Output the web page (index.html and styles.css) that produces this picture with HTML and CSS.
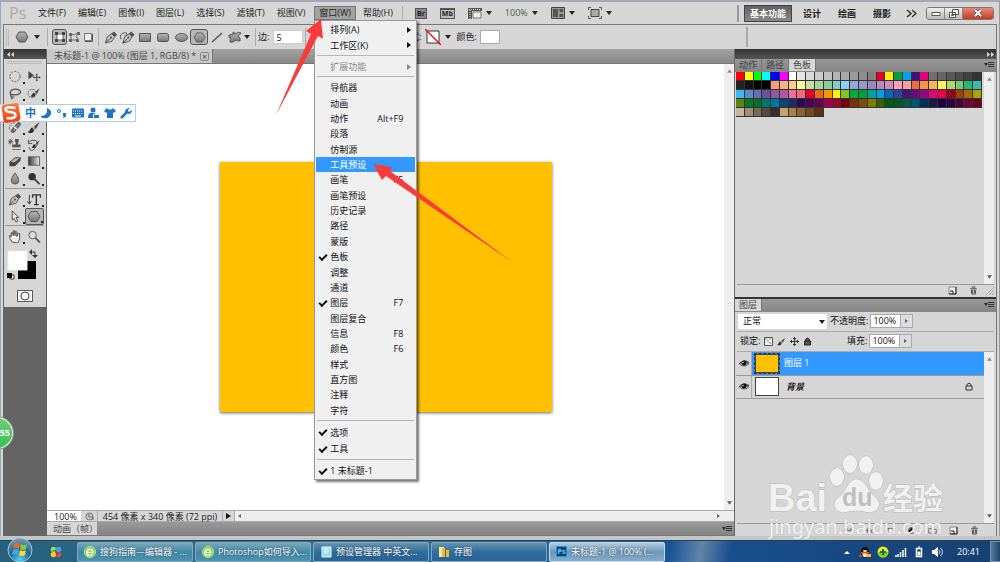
FILE: index.html
```html
<!DOCTYPE html>
<html lang="zh-CN">
<head>
<meta charset="utf-8">
<title>Photoshop</title>
<link rel="stylesheet" href="styles.css">
</head>
<body>
<svg class="defs" aria-hidden="true">
  <defs>
    <linearGradient id="metal" x1="0" y1="0" x2="0" y2="1"><stop offset="0" stop-color="#b5b5b5"/><stop offset="1" stop-color="#777"/></linearGradient>
    <linearGradient id="fade"><stop offset="0" stop-color="#333"/><stop offset="1" stop-color="#eee"/></linearGradient>
    <linearGradient id="sogou" x1="0" y1="0" x2="0" y2="1"><stop offset="0" stop-color="#ff7b3e"/><stop offset="1" stop-color="#f03c0c"/></linearGradient>
    <radialGradient id="orb" cx=".5" cy=".9" r=".9"><stop offset="0" stop-color="#4fd5f5"/><stop offset=".5" stop-color="#1f6596"/><stop offset="1" stop-color="#7d9fb3"/></radialGradient>
  </defs>
  <symbol id="hex" viewBox="0 0 14 12"><path d="M4 1h6l3 5-3 5H4L1 6z" fill="url(#metal)" stroke="#555"/></symbol>
  <symbol id="down" viewBox="0 0 6 4"><path d="M0 0h6L3 4z" fill="#222"/></symbol>
  <symbol id="up" viewBox="0 0 6 4"><path d="M0 4h6L3 0z" fill="#666"/></symbol>
  <symbol id="pen" viewBox="0 0 14 14"><path d="M1 13 3 6l5-3 3 3-3 5z" fill="#c4c4c4" stroke="#555"/><path d="M1 13l5-5" stroke="#444"/><path d="m8 3 2-2 3 3-2 2z" fill="#555" stroke="#444"/><circle cx="7" cy="7" r="1" fill="#444"/></symbol>
  <symbol id="brush" viewBox="0 0 14 14"><path d="M13 1 7 6l2 3z" fill="#444"/><path d="M7 6 5 8l2 2 2-1z" fill="#999"/><path d="M5 7c-2 0-2 4-5 5 3 2 7 1 7-2z" fill="#333"/></symbol>
  <symbol id="eye" viewBox="0 0 10 9"><path d="M0 4Q5-1 10 3v2Q5 10 0 5z" fill="#555"/><path d="M1 5Q5 2 9 5 5 8 1 5z" fill="#ddd"/><circle cx="5" cy="4" r="2.500" fill="#111"/><circle cx="4" cy="3.500" r=".7" fill="#fff"/></symbol>
  <symbol id="lock" viewBox="0 0 8 9"><path d="M1 4h6v4H1zM2 4V2.500Q4-.5 6 2.500V4" fill="none" stroke="#333"/></symbol>
  <symbol id="page" viewBox="0 0 9 9"><path d="M1 1h7v7H1z" fill="#eee" stroke="#888"/><path d="M8 1v7H1M2 5h3v3" fill="none" stroke="#222"/></symbol>
  <symbol id="trash" viewBox="0 0 9 10"><path d="M1 3h7M3 2V1h3v1M2 4l.5 5h4L7 4M3.500 4v4M5.500 4v4" fill="none" stroke="#444"/></symbol>
  <symbol id="panelmenu" viewBox="0 0 10 6"><path d="M0 1h4L2 4z" fill="#222"/><path d="M4 .5h6M4 2.500h6M4 4.500h6" stroke="#333"/></symbol>
  <symbol id="browser" viewBox="0 0 12 12"><circle cx="6" cy="6" r="5.500" fill="#75cf31" stroke="#b9f194"/><path d="M3 6.500h6C9 2 3 2.500 3 6.500s4 3.500 6 1.500" fill="none" stroke="#fff" stroke-width="1.500"/></symbol>
</svg>

<div class="app">
  <header class="menubar">
    <span class="brand">Ps</span>
    <nav class="menus">
      <button>文件(F)</button><button>编辑(E)</button><button>图像(I)</button><button>图层(L)</button><button>选择(S)</button><button>滤镜(T)</button><button>视图(V)</button>
      <div class="menu-open">
        <button class="active">窗口(W)</button>
        <div class="menu">
          <div class="group pair"><button>排列(A)<i class="sub"></i></button><button>工作区(K)<i class="sub"></i></button></div>
          <div class="group one"><button disabled>扩展功能<i class="sub"></i></button></div>
          <div class="group many">
            <button>导航器</button><button>动画</button><button>动作<kbd>Alt+F9</kbd></button><button>段落</button><button>仿制源</button>
            <button class="hover">工具预设</button><button>画笔<kbd>F5</kbd></button><button>画笔预设</button><button>历史记录</button><button>路径</button><button>蒙版</button>
            <button class="on">色板</button><button>调整</button><button>通道</button><button class="on">图层<kbd>F7</kbd></button><button>图层复合</button>
            <button>信息<kbd>F8</kbd></button><button>颜色<kbd>F6</kbd></button><button>样式</button><button>直方图</button><button>注释</button><button>字符</button>
          </div>
          <div class="group views"><button class="on">选项</button><button class="on">工具</button></div>
          <div class="group one"><button class="on">1 未标题-1</button></div>
        </div>
      </div>
      <button>帮助(H)</button>
    </nav>
    <div class="appbar">
      <span class="badge">Br</span><span class="badge folder">Mb</span>
      <span class="drop"><svg width="14" height="12" viewBox="0 0 14 12"><path d="M0 1h14v3H4v8H0z" fill="#555"/><path d="M1 2.500h12M2 3v9" stroke="#ddd" stroke-dasharray="1 1"/><path d="M5 5h8v6H5z" fill="#eee" stroke="#777"/></svg><svg class="caret"><use href="#down"/></svg></span>
      <span class="drop zoomtext">100%<svg class="caret"><use href="#down"/></svg></span>
      <span class="drop"><svg width="14" height="12" viewBox="0 0 14 12"><path d="M.5.5h13v11H.5z" fill="#999" stroke="#444"/><path d="M2 2h5v8H2zM8.500 2H12v3H8.500zM8.500 7H12v3H8.500z" fill="#555"/></svg><svg class="caret"><use href="#down"/></svg></span>
      <span class="drop"><svg width="14" height="12" viewBox="0 0 14 12"><path d="M3 2.500h8v7H3z" fill="#aaa" stroke="#444"/><path d="M.5 3V.5H3M11 .5h2.500V3M.5 9v2.500H3M11 11.500h2.500V9" fill="none" stroke="#555"/></svg><svg class="caret"><use href="#down"/></svg></span>
    </div>
    <div class="spaces">
      <button class="current">基本功能</button><button>设计</button><button>绘画</button><button>摄影</button>
      <svg width="11" height="9" viewBox="0 0 11 9"><path d="m1 1 4 3.500L1 8M6 1l4 3.500L6 8" fill="none" stroke="#333" stroke-width="1.500"/></svg>
    </div>
    <div class="winbtns">
      <button aria-label="最小化"><svg width="10" height="8" viewBox="0 0 10 8"><path d="M1 3.500h8v3H1z" fill="#fff" stroke="#555"/></svg></button>
      <button aria-label="还原"><svg width="10" height="9" viewBox="0 0 10 9"><path d="M3.500.5h6v5h-6zM.5 3.500h6v5h-6zM2.500 5.500h2v1h-2z" fill="#fff" stroke="#555"/></svg></button>
      <button class="close" aria-label="关闭"><svg width="10" height="8" viewBox="0 0 10 8"><path d="m2 1 6 6M8 1 2 7" stroke="#645" stroke-width="3.500"/><path d="m2 1 6 6M8 1 2 7" stroke="#fff" stroke-width="2"/></svg></button>
    </div>
  </header>

  <section class="options">
    <i class="grip"></i>
    <span class="drop tool-pick"><svg width="14" height="12"><use href="#hex"/></svg><svg class="caret"><use href="#down"/></svg></span>
    <div class="set ruled modes">
      <span class="cell pressed"><svg width="10" height="10" viewBox="0 0 10 10"><path d="M2 2h6v6H2z" fill="#fff" stroke="#666"/><path d="M0 0h3v3H0zM7 0h3v3H7zM0 7h3v3H0zM7 7h3v3H7z" fill="#444"/></svg></span>
      <span class="cell"><svg width="11" height="10" viewBox="0 0 11 10"><path d="M2 2Q5 4 9 1 6 5 9 8H2z" fill="none" stroke="#666"/><path d="M0 1h3v3H0zM8 0h3v3H8zM0 7h3v3H0zM7 7h3v3H7z" fill="#666"/></svg></span>
      <span class="cell"><svg width="9" height="9" viewBox="0 0 9 9"><path d="M.5.5h7v7h-7z" fill="#eee" stroke="#777"/><path d="M1 8.500h7.500V1" fill="none" stroke="#555"/></svg></span>
    </div>
    <div class="set ruled shapes">
      <span class="cell"><svg width="14" height="13"><use href="#pen"/></svg></span>
      <span class="cell"><svg width="15" height="13" viewBox="0 0 16 14"><use href="#pen" x="2" width="14" height="14"/><path d="M1 9Q-1 3 4 2T6 5" fill="none" stroke="#555"/></svg></span>
      <span class="cell"><svg width="12" height="11" viewBox="0 0 12 11"><path d="M.5 1.500h11v8H.5z" fill="url(#metal)" stroke="#555"/></svg></span>
      <span class="cell"><svg width="12" height="11" viewBox="0 0 12 11"><rect x=".5" y="1.500" width="11" height="8" rx="2" fill="url(#metal)" stroke="#555"/></svg></span>
      <span class="cell"><svg width="13" height="11" viewBox="0 0 13 11"><ellipse cx="6.500" cy="5.500" rx="6" ry="4" fill="url(#metal)" stroke="#555"/></svg></span>
      <span class="cell pressed"><svg width="13" height="11"><use href="#hex"/></svg></span>
      <span class="cell"><svg width="12" height="11" viewBox="0 0 12 11"><path d="m1 10 10-9" stroke="#555" stroke-width="1.500"/></svg></span>
      <span class="cell"><svg width="14" height="12" viewBox="0 0 14 12"><path d="M5 1q2 0 2 2 4-3 6-1-1 2-3 3 3 2 2 5-3 0-4-1-3 3-6 2 0-3 1-4-3 0-2-3 2-1 4 0z" fill="url(#metal)" stroke="#555"/></svg></span>
      <svg class="caret"><use href="#down"/></svg>
    </div>
    <div class="set ruled field"><label for="sides">边:</label><input id="sides" value="5"></div>
    <div class="set ruled style-set"><span>样式:</span><svg width="16" height="16" viewBox="0 0 16 16"><path d="M2 2h12v12H2z" fill="#fff" stroke="#333"/><path d="m0 0 16 16" stroke="#e11" stroke-width="1.500"/></svg><svg class="caret"><use href="#down"/></svg></div>
    <div class="set colour"><label for="fill">颜色:</label><input id="fill" readonly></div>
    <i class="tail-rule"></i>
  </section>

  <main class="workspace">
    <aside class="tools">
      <div class="dockhead"><svg width="7" height="5" viewBox="0 0 7 5"><path d="M3 0v5L0 2.500zM7 0v5L4 2.500z" fill="#ddd"/></svg></div>
      <div class="toolbox">
        <i class="grip-h"></i>
        <div class="toolgrid">
          <span class="more"><svg viewBox="0 0 14 14"><circle cx="7" cy="7" r="5.500" fill="none" stroke="#444" stroke-dasharray="2 1.500"/></svg></span>
          <span><svg viewBox="0 0 14 14"><path d="M1 1v9l6-4z" fill="#444"/><path d="M10 4v8M6 8h8M9 5h2M9 11h2M7 7v2M13 7v2" stroke="#444"/></svg></span>
          <span class="more"><svg viewBox="0 0 14 14"><path d="M3 9C-1 4 6 1 11 3s0 7-8 5q-2 3 2 3l-2 2" fill="none" stroke="#555" stroke-width="1.500"/></svg></span>
          <span class="more"><svg viewBox="0 0 14 14"><circle cx="5" cy="7" r="4.500" fill="none" stroke="#555" stroke-dasharray="2 1"/><use href="#brush" x="3" y="0" width="11" height="12"/></svg></span>
          <span></span><span></span>
          <span class="more"><svg viewBox="0 0 14 14"><path d="m3 10 7-8q3-1 3 2l-7 8q-4 1-3-2z" fill="#777" stroke="#444"/><path d="m6 6 3 3" stroke="#ddd" stroke-width="2"/><path d="M1 9Q0 2 7 2" fill="none" stroke="#555" stroke-dasharray="2 1"/></svg></span>
          <span class="more"><svg viewBox="0 0 14 14"><use href="#brush" width="14" height="14"/></svg></span>
          <span class="more"><svg viewBox="0 0 14 14"><path d="M7 1h4v2L10 7h3v3H4V7h4L7 3zM4 12h9v1H4z" fill="#555"/><path d="M0 2l4 4M4 2 0 6M2 1v6M0 4h5" stroke="#555"/></svg></span>
          <span class="more"><svg viewBox="0 0 14 14"><path d="M2 4q3-3 7-1t-1 8-6-1M1 2v4h4" fill="none" stroke="#444"/><use href="#brush" x="4" y="1" width="10" height="11"/></svg></span>
          <span class="more"><svg viewBox="0 0 14 14"><path d="m1 8 6-5h6l-6 5z" fill="#bbb" stroke="#444"/><path d="M1 8h6l6-5v3l-6 6H1z" fill="#444"/></svg></span>
          <span class="more"><svg viewBox="0 0 14 14"><path d="M1 2h12v9H1z" fill="url(#fade)" stroke="#555"/></svg></span>
          <span class="more"><svg viewBox="0 0 14 14"><path d="M7 1q4 5 4 8a4 4 0 0 1-8 0q0-3 4-8z" fill="url(#metal)" stroke="#555"/></svg></span>
          <span class="more"><svg viewBox="0 0 14 14"><circle cx="5" cy="5" r="4" fill="#333"/><path d="m7 7 6 6" stroke="#444" stroke-width="2"/></svg></span>
        </div>
        <div class="toolgrid ruled-top">
          <span class="more"><svg><use href="#pen"/></svg></span>
          <span class="more"><svg viewBox="0 0 14 14"><path d="M5 2h9v3M9.500 2v10M7 12.500h5M5.500 2v3" fill="none" stroke="#333" stroke-width="1.500"/><path d="M2 2v9M0 9l2 3 2-3" fill="none" stroke="#333"/></svg></span>
          <span class="more"><svg viewBox="0 0 14 14"><path d="M4 1v10l2-2 2 4 2-1-2-4h3z" fill="#eee" stroke="#444"/></svg></span>
          <span class="more chosen"><svg><use href="#hex"/></svg></span>
        </div>
        <div class="toolgrid ruled-top">
          <span class="more"><svg viewBox="0 0 14 14"><path d="M4 13Q1 9 1 6l2 1V3h2v3-5h2v5-4h2v5l1-3h2q1 6-2 10z" fill="#eee" stroke="#444"/></svg></span>
          <span><svg viewBox="0 0 14 14"><circle cx="5.500" cy="5.500" r="4" fill="#ddd" stroke="#555"/><path d="m8.500 8.500 5 5" stroke="#555" stroke-width="2"/></svg></span>
        </div>
        <svg class="fgbg" viewBox="0 0 36 34"><path d="M13 14h18v18H13z"/><path d="M3 4h19v19H3z" fill="#fff" stroke="#eee"/><path d="M26 5h4v5" fill="none" stroke="#333"/><path d="M27 2v6l-3-3zM27 8h6l-3 3z" fill="#333"/><path d="M5 28h4v4H5z" fill="#fff" stroke="#333"/><path d="M2 26h5v5H2z"/></svg>
        <svg class="mask" viewBox="0 0 16 12"><path d="M.5.5h15v11H.5z" fill="#fff" stroke="#555"/><circle cx="8" cy="6" r="4" fill="#fff" stroke="#444"/></svg>
      </div>
    </aside>

    <section class="document">
      <div class="doctabs"><div class="doctab">未标题-1 @ 100% (图层 1, RGB/8) *<button aria-label="关闭">×</button></div></div>
      <div class="view">
        <div class="stage"><div class="artboard"></div></div>
        <div class="vscroll"><svg><use href="#up"/></svg><svg><use href="#down"/></svg></div>
      </div>
      <div class="status">
        <span class="percent">100%</span><span class="clock"><svg width="9" height="9" viewBox="0 0 9 9"><circle cx="4.500" cy="4.500" r="3.500" fill="#ccc" stroke="#777"/><path d="M4 2v3h4v3" fill="none" stroke="#666"/></svg></span>
        <span class="info">454 像素 x 340 像素 (72 ppi)</span><span class="next"></span>
        <span class="hscroll"><i class="left"></i><i class="right"></i></span>
      </div>
      <div class="animation"><span>动画（帧）</span><svg class="pm"><use href="#panelmenu"/></svg></div>
    </section>

    <aside class="panels">
      <div class="dockhead end"><svg width="7" height="5" viewBox="0 0 7 5"><path d="M0 0v5l3-2.500zM4 0v5l3-2.500z" fill="#ddd"/></svg></div>
      <section class="panel swatch-panel">
        <div class="tabs"><button>动作</button><button>路径</button><button class="current">色板</button><svg class="pm"><use href="#panelmenu"/></svg></div>
        <div class="panel-body"><div class="content"><div class="swatches" id="swatches"></div></div><div class="vscroll"><svg><use href="#up"/></svg><svg><use href="#down"/></svg></div></div>
        <div class="foot"><svg><use href="#page"/></svg><svg><use href="#trash"/></svg><svg viewBox="0 0 9 9" class="resize"><path d="m1 9 8-8M4 9l5-5M7 9l2-2" stroke="#aaa"/></svg></div>
      </section>
      <section class="panel layer-panel">
        <div class="tabs"><button class="current">图层</button><svg class="pm"><use href="#panelmenu"/></svg></div>
        <div class="controls">
          <div class="blend"><select aria-label="混合模式"><option>正常</option></select><svg class="caret"><use href="#down"/></svg></div>
          <label for="opacity">不透明度:</label><span class="amount"><input id="opacity" value="100%"><button aria-label="调整不透明度"></button></span>
        </div>
        <div class="controls">
          <div class="locks"><span>锁定:</span><svg viewBox="0 0 9 9"><path d="M.5.5h8v8h-8z" fill="#eee" stroke="#555"/><path d="M1 1h2v2H1zM5 1h2v2H5zM3 3h2v2H3zM5 5h2v2H5z" fill="#bbb"/></svg><svg viewBox="0 0 14 14"><use href="#brush"/></svg><svg viewBox="0 0 9 9"><path d="M4.500 0v9M0 4.500h9M3 1.500h3M3 7.500h3M1.500 3v3M7.500 3v3" stroke="#333"/></svg><svg viewBox="0 0 8 9"><path d="M1 4h6v4H1zM2 4V2.500Q4-.5 6 2.500V4" fill="#555" stroke="#222"/></svg></div>
          <label for="fillamt">填充:</label><span class="amount"><input id="fillamt" value="100%"><button aria-label="调整填充"></button></span>
        </div>
        <div class="panel-body">
          <div class="content layers">
            <div class="layer selected"><span class="vis"><svg><use href="#eye"/></svg></span><i class="thumb gold"></i><span>图层 1</span></div>
            <div class="layer"><span class="vis"><svg><use href="#eye"/></svg></span><i class="thumb"></i><em>背景</em><svg class="lock"><use href="#lock"/></svg></div>
          </div>
          <div class="vscroll"><svg><use href="#up"/></svg><svg><use href="#down"/></svg></div>
        </div>
        <div class="foot layer-foot">
          <svg viewBox="0 0 12 9"><path d="M1 4.500q0-2 2-2h2m-2 4q-2 0-2-2M7 2.500h2q2 0 2 2t-2 2H7M3 4.500h6" fill="none" stroke="#555"/></svg><svg viewBox="0 0 12 9"><path d="M5 1Q3 1 3 8M1 4h4M6 3l4 5M10 3 6 8" fill="none" stroke="#444"/></svg><svg viewBox="0 0 12 9"><path d="M1 1h10v7H1z" fill="#777"/><circle cx="6" cy="4.500" r="2.500" fill="#fff"/></svg><svg viewBox="0 0 12 9"><circle cx="6" cy="4.500" r="4" fill="#eee" stroke="#222"/><path d="M3 7A4 4 0 0 1 9 2z"/></svg><svg viewBox="0 0 12 9"><path d="M1 8V2h4l1 1h5v5z" fill="#ddd" stroke="#555"/></svg><svg><use href="#page"/></svg><svg><use href="#trash"/></svg>
        </div>
      </section>
    </aside>
  </main>
</div>

<footer class="taskbar">
  <button class="start" aria-label="开始"><svg viewBox="0 0 26 24"><circle cx="13" cy="12" r="12" fill="url(#orb)" stroke="#9fc4d5"/><path d="M7 6q3-2 6 0l-1 5q-3-2-6 0z" fill="#ec6b2b"/><path d="M14 6q3 2 6 0l-1 5q-3 2-6 0z" fill="#8cc63f"/><path d="M6 12q3-2 6 0l-1 5q-3-2-6 0z" fill="#4aa8e8"/><path d="M13 12q3 2 6 0l-1 5q-3 2-6 0z" fill="#ffd23e"/></svg></button>
  <svg class="quick" viewBox="0 0 12 12"><circle cx="3.500" cy="3.500" r="2.700" fill="#a4da45"/><circle cx="8.500" cy="3.500" r="2.700" fill="#3ba2ee"/><circle cx="3.500" cy="8.500" r="2.700" fill="#ffc928"/><circle cx="8.500" cy="8.500" r="2.700" fill="#ed4b32"/><path d="M3 5.500q3-3 3 .5t3 .5" fill="none" stroke="#245a78"/></svg>
  <div class="tasks">
    <button class="light"><svg><use href="#browser"/></svg><span>搜狗指南—编辑器 - ...</span></button>
    <button class="light"><svg><use href="#browser"/></svg><span>Photoshop如何导入...</span></button>
    <button><svg viewBox="0 0 12 12"><path d="M2 1h9v10H2z" fill="#9adbe5" stroke="#e2fbff"/><path d="M4 3h5M4 5h5M4 7h4" stroke="#d9ffff"/></svg><span>预设管理器 中英文...</span></button>
    <button><svg viewBox="0 0 12 12"><path d="M1 1h5v10H1z" fill="#ffe98a"/><path d="M4 2h3v9H4zM8 4h3v7H8z" fill="#e7bd3d"/></svg><span>存图</span></button>
    <button class="front"><b>Ps</b><span>未标题-1 @ 100% (...</span></button>
  </div>
  <div class="tray">
    <svg viewBox="0 0 12 12"><path d="M3 8h6L6 5z" fill="#fff"/></svg>
    <svg viewBox="0 0 12 12"><ellipse cx="6" cy="6" rx="4" ry="5.500" fill="#111"/><ellipse cx="6" cy="8" rx="2.500" ry="3" fill="#fff"/><path d="M2 6h8v1.500H2zM1 8l2 2v1H0z" fill="#e42"/><path d="M7 8h5v3H7zM4 4h4v1H4z" fill="#fb2"/></svg>
    <svg viewBox="0 0 12 12"><circle cx="6" cy="6" r="5.500" fill="#f7e71d"/><path d="M1 6a5 5 0 0 0 10 0z" fill="#7ac82b"/><path d="M6 3v6M3 6h6" stroke="#174" stroke-width="2"/></svg>
    <svg viewBox="0 0 12 12"><path d="M1 9v2M3 8v3M5.500 6v5M8 4v7M10.500 2v9" stroke="#fff" stroke-width="1.500"/></svg>
    <svg viewBox="0 0 12 12"><path d="M3.500 2.500h5v8h-5z" fill="none" stroke="#fff" stroke-width="1.500"/><path d="M5 1h2M5 6h2v3H5z" fill="#fff" stroke="#fff"/></svg>
    <svg viewBox="0 0 12 12"><path d="M1 4h2l4-3v10L3 8H1z" fill="#fff"/><path d="M8 4q2 2 0 4M9.500 2q4 4 0 8" fill="none" stroke="#cde"/></svg>
  </div>
  <time>20:41</time>
  <button class="peek" aria-label="显示桌面"></button>
</footer>

<div class="ime">
  <svg class="sogou" viewBox="0 0 20 20"><path d="M3 2 16 0q2 0 2 2l2 13q0 2-2 3L6 20q-2 0-3-2L1 4q0-1 2-2z" fill="url(#sogou)"/><path d="M15 5Q6 3 5 6q0 3 5 3 6 1 5 4-1 3-9 2" fill="none" stroke="#fff" stroke-width="2.500"/></svg>
  <b>中</b>
  <svg viewBox="0 0 12 12"><path d="M7 1q5 2 4 6-2 5-7 4-3 0-3-2 7 0 6-8z" fill="#1d73c6"/></svg>
  <svg viewBox="0 0 12 12"><circle cx="3" cy="4" r="1.500" fill="none" stroke="#1d73c6"/><path d="M7 6h3v3l-2 2H7l1-2H7z" fill="#1d73c6"/></svg>
  <svg viewBox="0 0 12 12"><rect y="1.500" width="12" height="9" rx="1" fill="#1d73c6"/><path d="M1 4h10M1 6.500h10" stroke="#fff" stroke-dasharray="1 1"/><path d="M3 9h6" stroke="#fff"/></svg>
  <svg viewBox="0 0 12 12"><circle cx="5" cy="3" r="2.500" fill="#1d73c6"/><path d="M0 11q0-6 5-5 4 0 5 5z" fill="#1d73c6"/><path d="M5.500 7.500h6v4h-6z" fill="#1d73c6" stroke="#fff"/></svg>
  <svg viewBox="0 0 12 12"><path d="m3 1 1 1q2 1 4 0l1-1 3 3-2 2-1-1v6H3V5L2 6 0 4z" fill="#1d73c6"/></svg>
  <svg viewBox="0 0 12 12"><path d="m1 11 6-6" stroke="#1d73c6" stroke-width="2.500"/><path d="M10 1 8 3v1l1 1 3-2q0 4-4 4-3-1-3-3 1-3 5-3z" fill="#1d73c6"/></svg>
</div>
<div class="speedball">55</div>

<svg class="watermark" viewBox="0 0 190 90" width="190" height="90">
  <g class="mark">
    <text x="1" y="61" class="wm-latin">Bai</text>
    <ellipse cx="70" cy="27" rx="7" ry="9"/><ellipse cx="83" cy="14" rx="7" ry="9"/><ellipse cx="99" cy="15" rx="7" ry="9"/><ellipse cx="109" cy="31" rx="7" ry="9"/>
    <path d="M89 29q6 0 10 7t9 11q6 5 3 11-3 5-11 4-11-3-21 0-9 1-11-5-2-6 4-10 5-4 8-10t9-8z"/>
    <text x="116" y="59" class="wm-cjk">经验</text>
    <text x="75" y="56" class="wm-du">du</text>
    <text x="2" y="84" class="wm-url">jingyan.baidu.com</text>
  </g>
</svg>
<svg class="arrows" viewBox="0 0 1000 562" width="1000" height="562">
  <path d="M276 115 311 34l-5-3 15-12 2 20-5-3zM512 262 386 176l-4 4-9-16 19 3-2 4z" fill="#fb3b3b"/>
</svg>
<script src="swatches.js"></script>
</body>
</html>
```
FILE: styles.css
```css
* { box-sizing: border-box; }
body { margin: 0; height: 100vh; min-width: 960px; overflow: hidden; display: flex; flex-direction: column; background: #d6d6d6; color: #222; font: 9px/12px "Open Sans", "Noto Sans CJK SC", sans-serif; }
button, input, select { font: inherit; color: inherit; margin: 0; padding: 0; border: 0; background: none; border-radius: 0; }
button { white-space: nowrap; }
svg { flex: none; display: block; }
.defs { position: absolute; width: 0; height: 0; }
.caret { width: 6px; height: 4px; }

.app { flex: 1; min-height: 0; display: flex; flex-direction: column; padding: 0 3px 0 3px; border-top: 2px solid #a5a7b2; border-bottom: 4px solid #c5c5c5; background: #d6d6d6; box-shadow: inset 1px 0 #9aa7b3, inset -1px 0 #999; }
.menubar { flex: none; height: 22px; display: flex; align-items: center; }
.brand { width: 29px; padding-left: 6px; color: #aaa; font: 16px/20px "Open Sans", sans-serif; }
.menus { display: flex; height: 100%; align-items: center; padding-right: 3px; }
.menus > button, .menu-open > button { padding: 0 6px; height: 14px; line-height: 12px; border: 0; }
.menu-open { position: relative; margin: 0 1px 0 3px; }
.menu-open > .active { border: 1px solid #777; background: #a2a2a2; padding: 0 4px; }
.menu { position: absolute; z-index: 10; top: 14px; left: 0; width: 103px; padding: 1px; border: 1px solid #999; background: #f0f0f0; box-shadow: 2px 2px 2px #0008; }
.group { display: grid; grid-auto-rows: 1fr; margin: 0 0 2px; position: relative; }
.group + .group { padding-top: 4px; }
.group + .group::before { content: ""; position: absolute; top: 0; left: 1px; right: 1px; border-top: 1px solid #b5b5b5; }
.group:last-child { margin-bottom: 0; }
.pair { min-height: 31px; }
.one { min-height: 19px; }
.many { min-height: 342px; }
.views { min-height: 37px; }
.menu button { display: flex; align-items: center; justify-content: space-between; padding: 0 12px 0 14px; text-align: left; line-height: 13px; color: #111; position: relative; }
.menu button:disabled { color: #888; }
.menu .hover { background: #3399ff; color: #fff; }
.menu kbd { font: inherit; }
.menu .on::before { content: ""; position: absolute; left: 3px; top: 5px; width: 6px; height: 3px; border: solid #111; border-width: 0 0 2px 2px; rotate: -45deg; }
.sub { border: solid transparent; border-width: 3px 0 3px 4px; border-left-color: currentColor; margin-right: -8px; }

.appbar { display: flex; align-items: center; gap: 13px; padding-left: 12px; border-left: 1px solid #aaa; height: 15px; }
.badge { border: 1px solid #555; background: #888; color: #222; font: bold 7px/9px "Open Sans", sans-serif; padding: 0 1px; }
.folder { background: #bbb; border-top-width: 2px; line-height: 8px; }
.drop { display: flex; align-items: center; gap: 5px; }
.appbar .drop { gap: 4px; }
.zoomtext { color: #555; }
.spaces { margin-left: auto; display: flex; align-items: center; gap: 17px; padding-left: 5px; border-left: 2px solid #999; font-weight: bold; }
.spaces button { line-height: 15px; }
.spaces .current { background: linear-gradient(#606060, #888); border: 1px solid #444; color: #fff; padding: 0 5px; margin-right: -6px; }
.spaces svg { margin-left: -2px; }
.winbtns { display: flex; margin-left: 9px; border: 1px solid #777; border-radius: 3px; overflow: hidden; margin-right: 3px; }
.winbtns button { width: 18px; height: 11px; display: grid; place-items: center; background: linear-gradient(#eee, #bbb); border-right: 1px solid #888; }
.winbtns .close { width: 30px; background: linear-gradient(#e68a75, #c53a20); border: 0; }

.options { flex: none; height: 25px; display: flex; align-items: center; border: 1px solid #777; border-bottom: 0; }
.grip { width: 3px; height: 17px; margin: 0 6px 0 2px; border: solid #bbb; border-width: 0 1px; }
.tool-pick { padding-right: 7px; }
.set { display: flex; align-items: center; height: 18px; }
.ruled { border-left: 1px solid #aaa; padding-left: 4px; }
.cell { width: 18px; height: 16px; display: grid; place-items: center; flex: none; }
.modes .cell { width: 14px; }
.modes .pressed, .shapes .cell:first-child { width: 15px; }
.pressed { border: 1px solid #555; border-radius: 3px; background: #b8b8b8; }
.modes { padding-right: 3px; }
.shapes { padding-right: 5px; }
.field { gap: 4px; padding: 0 2px; }
.field input, .colour input { width: 30px; height: 14px; background: #fff; border: 1px solid #ccc; padding: 0 2px; }
.style-set { width: 146px; justify-content: flex-end; gap: 4px; }
.colour { padding-left: 5px; gap: 3px; }
.colour input { width: 20px; border-color: #aaa; }
.tail-rule { margin-left: auto; margin-right: 248px; height: 20px; border-left: 2px solid #aaa; }

.workspace { flex: 1; min-height: 0; display: flex; }
.dockhead { height: 10px; flex: none; padding: 3px 7px 0; background: linear-gradient(#333, #555); display: flex; }
.tools .dockhead { padding-left: 3px; }
.end { justify-content: flex-end; padding-right: 2px; }
.tools { width: 44px; background: #646464; border: solid #646464; border-width: 0 1px 0 1px; flex: none; }
.toolbox { background: #d6d6d6; display: flex; flex-direction: column; padding: 2px 2px 5px 1px; }
.grip-h { height: 3px; border: solid #bbb; border-width: 1px 0; margin: 0 2px 3px; }
.toolgrid { display: grid; grid-template-columns: 1fr 1fr; grid-auto-rows: 17px; padding: 1px 0; }
.toolgrid span { display: grid; place-items: center; position: relative; }
.toolgrid svg { width: 14px; height: 13px; }
.more::after { content: ""; position: absolute; right: 0; bottom: 1px; border: 1px solid #222; }
.chosen { border: 1px solid #555; border-radius: 2px; background: #b5b5b5; }
.ruled-top { border-top: 1px solid #999; padding: 2px 0 0; }
.fgbg { width: 36px; height: 34px; margin: 2px 0 9px; }
.mask { width: 16px; height: 12px; align-self: center; }

.document { flex: 1; min-width: 0; display: flex; flex-direction: column; border-right: 1px solid #666; }
.doctabs { flex: none; height: 15px; display: flex; background: linear-gradient(#a2a2a2, #888); border-bottom: 1px solid #777; }
.doctab { display: flex; align-items: center; gap: 4px; padding: 0 3px 0 7px; background: #c8c8c8; border-right: 1px solid #777; color: #444; }
.doctab button { width: 9px; height: 9px; border: 1px solid #888; border-radius: 2px; line-height: 7px; }
.view { flex: 1; display: flex; min-height: 0; background: #fff; }
.stage { flex: 1; display: grid; place-items: center; }
.artboard { width: 332px; height: 250px; background: #ffc000; box-shadow: 0 1px 3px #0009; }
.vscroll { flex: none; width: 10px; background: #eee; display: flex; flex-direction: column; justify-content: space-between; align-items: center; padding: 5px 0; }
.vscroll svg { width: 5px; height: 4px; opacity: .7; }
.status { flex: none; height: 12px; display: flex; border: solid #aaa; border-width: 1px 0; line-height: 11px; background: #d6d6d6; }
.percent { width: 34px; padding-left: 7px; background: #fff; }
.clock { width: 17px; display: grid; place-items: center; border-right: 1px solid #aaa; }
.info { width: 125px; text-align: center; border-right: 1px solid #aaa; }
.next { width: 12px; border-right: 1px solid #aaa; display: grid; place-items: center; }
.next::before { content: ""; border: solid transparent; border-width: 3px 0 3px 5px; border-left-color: #111; }
.hscroll { flex: 1; background: #eee; display: flex; justify-content: space-between; align-items: center; padding: 0 14px 0 3px; }
.left, .right { border: solid transparent; border-width: 2px 3px; }
.left { border-right-color: #666; border-left: 0; }
.right { border-left-color: #666; border-right: 0; }
.animation { flex: none; height: 14px; display: flex; align-items: center; justify-content: space-between; padding-right: 2px; background: linear-gradient(#999, #858585); border-bottom: 1px solid #777; }
.animation span { width: 50px; padding-left: 6px; background: #d6d6d6; color: #444; line-height: 13px; white-space: nowrap; }
.pm { width: 10px; height: 6px; }

.panels { width: 262px; flex: none; display: flex; flex-direction: column; border-right: 1px solid #777; }
.panel { display: flex; flex-direction: column; min-height: 0; }
.swatch-panel { flex: 238; border-bottom: 2px solid #333; }
.layer-panel { flex: 238; }
.tabs { flex: none; display: flex; height: 13px; align-items: stretch; background: linear-gradient(#999, #858585); border-bottom: 1px solid #888; padding-right: 2px; }
.tabs button { padding: 0 4px; line-height: 12px; border-right: 1px solid #777; color: #444; }
.tabs .current { background: #d6d6d6; }
.tabs .pm { margin: 3px 0 0 auto; }
.panel-body { flex: 1; min-height: 0; display: flex; margin: 0 2px 0 1px; }
.content { flex: 1; min-width: 0; }
.swatches { display: grid; grid-template-columns: repeat(28, 1fr); grid-auto-rows: 9px; margin-right: 2px; }
.swatches span { border: solid #333; border-width: 0 1px 1px 0; }
.foot { flex: none; height: 13px; margin: 0 2px; border-top: 1px solid #999; display: flex; justify-content: flex-end; align-items: center; gap: 12px; }
.foot svg { width: 9px; height: 9px; }
.foot .resize { margin-left: -5px; }
.controls { flex: none; height: 20px; display: flex; align-items: center; margin: 0 2px; border-bottom: 1px solid #aaa; line-height: 14px; color: #111; }
.blend { position: relative; width: 89px; margin: 0 3px 0 1px; }
.blend select { appearance: none; width: 100%; height: 15px; background: #fff; padding-left: 5px; }
.blend .caret { position: absolute; right: 2px; top: 6px; }
.locks { display: flex; align-items: center; gap: 4px; width: 110px; padding-left: 3px; }
.locks svg { width: 9px; height: 9px; }
.controls label { white-space: nowrap; }
.amount { margin-left: 2px; display: flex; height: 14px; border: 1px solid #aaa; }
.amount input { width: 29px; background: #fff; padding-left: 2px; }
.amount button { width: 12px; background: #ddd; border-left: 1px solid #aaa; display: grid; place-items: center; }
.amount button::before { content: ""; border: solid transparent; border-width: 2px 0 2px 3px; border-left-color: #46a; }
.layer { display: flex; align-items: center; height: 23px; border-bottom: 1px solid #999; }
.selected { background: #3399ff; color: #fff; height: 24px; }
.vis { width: 16px; align-self: stretch; display: grid; place-items: center; background: #d6d6d6; border-right: 1px solid #aaa; }
.vis svg { width: 10px; height: 9px; }
.thumb { width: 24px; height: 19px; margin: 0 5px 0 3px; background: #fff; border: 1px solid #444; }
.layer .thumb + em { margin-left: 2px; font-weight: bold; }
.gold { background: #ffc000; outline: 1px dashed #333; }
.lock { width: 8px; height: 9px; margin-left: auto; margin-right: 11px; }
.layer-foot { padding-right: 15px; }

.taskbar { flex: none; height: 22px; display: flex; align-items: center; background: linear-gradient(100deg, #26607d 0, #2e7498 30%, #1f65a0 55%, #1a5596 67%, #6284a8 70%, #184e8d 73%, #17406f 100%); color: #fff; border-top: 1px solid #24415a; }
.start { width: 26px; height: 24px; margin: -3px 0 0 7px; }
.start svg { width: 26px; height: 24px; }
.quick { width: 12px; height: 12px; margin: 0 15px 0 17px; }
.tasks { display: flex; gap: 2px; flex: 0 1 588px; height: 20px; }
.tasks button { flex: 1 1 0; min-width: 0; display: flex; align-items: center; gap: 4px; padding: 0 6px; border: 1px solid #87a9bf; border-radius: 2px; background: linear-gradient(#6793ae, #2e6d9c 50%, #296399); text-shadow: 0 0 2px #234; overflow: hidden; }
.tasks .light { background: linear-gradient(#7aa7ba, #4289a7 50%, #4c93ad); }
.tasks .front { background: linear-gradient(#b6cbdc, #6c96b9 50%, #85adcb); border-color: #c7d9e6; }
.tasks svg { width: 12px; height: 12px; }
.tasks b { width: 11px; height: 11px; font-size: 7px; line-height: 10px; color: #68d6ff; background: #05427e; border: 1px solid #19a0e3; }
.tray { margin-left: auto; display: flex; gap: 6px; }
.tray svg { width: 12px; height: 12px; }
.taskbar time { margin: 0 10px 0 14px; }
.peek { width: 10px; height: 21px; border: 1px solid #7691aa; border-right: 0; background: linear-gradient(90deg, #557c9d, #1d446c); }

.ime { position: absolute; z-index: 12; top: 104px; left: 0; display: flex; align-items: center; gap: 4px; height: 18px; padding-right: 3px; background: #fafcff; border: 1px solid #b6cde0; border-left: 0; }
.ime svg { width: 12px; height: 12px; }
.ime .sogou { width: 21px; height: 20px; }
.ime b { color: #1d73c6; font-size: 11px; line-height: 16px; }
.speedball { position: absolute; left: -20px; top: 416px; width: 34px; height: 34px; border: 1px solid #999; border-radius: 50%; box-shadow: inset 0 0 0 1px #eee; background: linear-gradient(#77cc78, #32c052); color: #fff; font: bold 9px/32px "Open Sans", sans-serif; text-align: right; padding-right: 3px; }
.watermark { position: absolute; z-index: 8; right: 43px; bottom: 22px; pointer-events: none; }
.mark { fill: #f5f5f5; stroke: #b5b5b5; stroke-width: 1px; paint-order: stroke; opacity: .9; }
.wm-latin { font: bold 38px "Liberation Sans", sans-serif; }
.wm-cjk { font: bold 30px "Noto Sans CJK SC", sans-serif; }
.wm-du { font: bold 25px "Liberation Sans", sans-serif; fill: #bdbdbd; stroke: none; }
.wm-url { font: 20px "Noto Sans", sans-serif; stroke-opacity: .5; }
.arrows { position: absolute; z-index: 20; top: 0; left: 0; pointer-events: none; }
```
FILE: swatches.js
```js
const rows = [
  "ff0000 ffff00 00ff00 00ffff 0000ff ff00ff ffffff e6e6e6 dadada cdcdcd c1c1c1 b4b4b4 a8a8a8 9a9a9a 8e8e8e 818181 e60027 fff100 009e41 00a3ea 45107e e5007e 707070 666666 595959 4d4d4d 404040 333333",
  "222222 111111 000000 000000 f59c7c f8b084 fccb8a fff99e c8e09c a8d59e 8ccb9e 8acccb 8ad0f5 93a8d6 9499c9 9b85be b88abd ce8bbb fb9ec4 fb9e9e f06a48 f5904f fab456 fff45f acd46f 7bc573 2bb573 3ab8b4",
  "3bb9f0 5b8bcb 6570b4 6c509e 8e5aa0 ae5aa0 f26ba0 f06a7a e60027 ec6818 f39800 fff100 80c520 00a83a 009e41 00a29a 00a0e9 0068b7 2c4198 45107e 6a0a80 920783 e5007e e60052 9c0014 a04008 a66b00 aba500",
  "568810 007a20 00712a 007570 0075a8 00457e 1c2a68 2c0858 4a005a 650050 a0004f a00030 780008 7c3008 7c4c00 7f7a00 386000 005a15 005820 005850 00557a 00305a 101c4c 1c0040 320042 48003a 730038 73001e",
  "c8b49a a08c78 786858 544840 3a2c2a c8a068 a88048 8c6430 744c1c 5c3410"
];
const grid = document.getElementById("swatches");
for (const colour of rows.join(" ").split(" ")) {
  const cell = document.createElement("span");
  cell.style.backgroundColor = "#" + colour;
  grid.append(cell);
}
```
